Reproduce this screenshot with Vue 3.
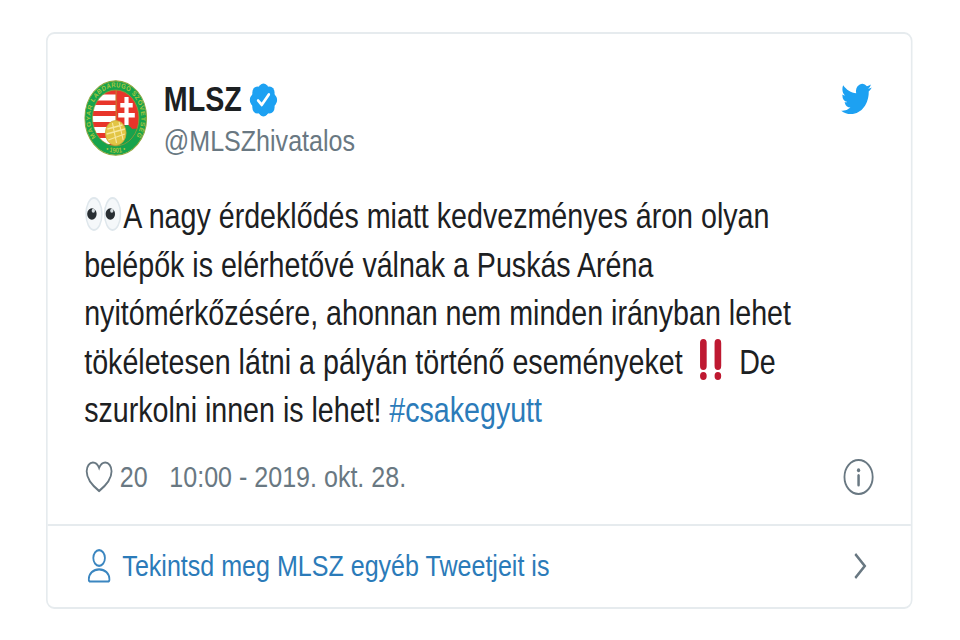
<script setup>
const lines = [
  { text: 'A nagy érdeklődés miatt kedvezményes áron olyan', eyes: true, spacing: 0 },
  { text: 'belépők is elérhetővé válnak a Puskás Aréna', spacing: -0.02 },
  { text: 'nyitómérkőzésére, ahonnan nem minden irányban lehet', spacing: 0 },
  { text: 'tökéletesen látni a pályán történő eseményeket', bang: true, after: 'De', spacing: 0 },
  { text: 'szurkolni innen is lehet! ', tag: '#csakegyutt', spacing: -0.02 },
]
</script>

<template>
  <article class="card">
    <div class="content">
      <header class="header">
        <svg class="avatar" viewBox="0 0 76 76">
          <defs>
            <path id="ring" d="M13.9 57A30.7 30.7 0 1 1 62.1 57" />
            <path id="year" d="M6 52A35 35 0 0 0 70 52" />
            <clipPath id="shield"><circle cx="38" cy="38" r="28" /></clipPath>
          </defs>
          <circle cx="38" cy="38" r="37.2" fill="#17a34c" stroke="#8fa840" stroke-width="1.2" />
          <g clip-path="url(#shield)">
            <path fill="#e8352a" d="M8 8h60v60H8z" />
            <path fill="#fff" d="M8 14.500h30v6H8zM8 25h30v6H8zM8 36h30v6H8zM8 47h30v6H8zM8 58h30v6H8z" />
            <path fill="#18a24c" d="M37 66l9-19 6-3 6 5 10-1v20H34z" />
            <path fill="#fff" d="M48.500 17h5v6h5v4.500h-5V33h7.500v4.500h-7.500V45h-5v-7.500H41V33h7.500v-5.500h-5V23h5z" />
            <path stroke="#c28a2d" stroke-width="1" d="M38.500 10v32" />
          </g>
          <circle cx="38" cy="38" r="28" fill="none" stroke="#8ea63a" stroke-width=".8" />
          <circle cx="38" cy="53" r="12.500" fill="#e2c545" stroke="#c9a83a" stroke-width=".8" />
          <path fill="none" stroke="#f7e8a0" stroke-width="1.300" d="M28 49l18-4M27 54l22-5M29 60l20-6M34 43l5 20M42 42l5 18" />
          <text class="ring-text"><textPath href="#ring" textLength="136">MAGYAR LABDARÚGÓ SZÖVETSÉG</textPath></text>
          <text class="ring-text"><textPath href="#year" startOffset="50%" text-anchor="middle">• 1901 •</textPath></text>
        </svg>
        <div class="author">
          <div class="name">
            <span>MLSZ</span>
            <svg class="verified" viewBox="0 0 34 34">
              <g fill="#1da1f2">
                <circle cx="17" cy="17" r="14.600" />
                <circle cx="17" cy="6.500" r="6" /><circle cx="24.400" cy="9.600" r="6" />
                <circle cx="27.500" cy="17" r="6" /><circle cx="24.400" cy="24.400" r="6" />
                <circle cx="17" cy="27.500" r="6" /><circle cx="9.600" cy="24.400" r="6" />
                <circle cx="6.500" cy="17" r="6" /><circle cx="9.600" cy="9.600" r="6" />
              </g>
              <path d="M10.500 17.500l4.500 4.300 8.500-10.300" fill="none" stroke="#fff" stroke-width="3" stroke-linecap="round" stroke-linejoin="round" />
            </svg>
          </div>
          <div class="handle">@MLSZhivatalos</div>
        </div>
        <svg class="bird" viewBox="0 0 24 24">
          <path fill="#1da1f2" d="M23.953 4.570a10 10 0 0 1-2.825.775 4.958 4.958 0 0 0 2.163-2.723c-.951.555-2.005.959-3.127 1.184a4.920 4.920 0 0 0-8.384 4.482C7.690 8.095 4.067 6.130 1.640 3.162a4.822 4.822 0 0 0-.666 2.475c0 1.710.870 3.213 2.188 4.096a4.904 4.904 0 0 1-2.228-.616v.060a4.923 4.923 0 0 0 3.946 4.827 4.996 4.996 0 0 1-2.212.085 4.936 4.936 0 0 0 4.604 3.417 9.867 9.867 0 0 1-6.102 2.105c-.390 0-.779-.023-1.170-.067a13.995 13.995 0 0 0 7.557 2.209c9.053 0 13.998-7.496 13.998-13.985 0-.210 0-.420-.015-.630A9.935 9.935 0 0 0 24 4.590z" />
        </svg>
      </header>

      <div class="tweet">
        <div v-for="line in lines" :key="line.text" class="line" :style="{ letterSpacing: line.spacing + 'px' }">
          <svg v-if="line.eyes" class="eyes" viewBox="0 0 44 36">
            <g fill="#f5f8fa" stroke="#dfe7ec" stroke-width="1.800">
              <ellipse cx="10.800" cy="18" rx="9.600" ry="16" /><ellipse cx="33.200" cy="18" rx="9.600" ry="16" />
            </g>
            <circle cx="8.300" cy="18" r="5.700" fill="#292f33" /><circle cx="30.500" cy="18" r="5.700" fill="#292f33" />
            <circle cx="10" cy="14.800" r="2" fill="#d5dce0" /><circle cx="32.300" cy="14.800" r="2" fill="#d5dce0" />
          </svg><span>{{ line.text }}</span><svg v-if="line.bang" class="bang" viewBox="0 0 32 41">
            <g fill="#be1931">
              <rect x="1" y="0" width="8" height="31" rx="4" /><circle cx="5" cy="37" r="4" />
              <rect x="18.500" y="0" width="8" height="31" rx="4" /><circle cx="22.500" cy="37" r="4" />
            </g>
          </svg><span v-if="line.after">{{ line.after }}</span><a v-if="line.tag" class="tag">{{ line.tag }}</a>
        </div>
      </div>

      <div class="meta">
        <svg class="heart" viewBox="0 0 34 32">
          <path d="M17 30C11 26 2 18.500 2 10.300 2 5 5.500 1.500 9.500 1.500c3.500 0 6 2 7.500 5.400 1.500-3.400 4-5.400 7.500-5.400 4 0 7.500 3.500 7.500 8.800C32 18.500 23 26 17 30z" />
        </svg>
        <span class="likes">20</span>
        <time class="time">10:00 - 2019. okt. 28.</time>
        <svg class="info" viewBox="0 0 38 38">
          <circle cx="19" cy="19" r="17" />
          <path d="M19 17.500v9.500" stroke-width="3" stroke-linecap="round" />
          <circle cx="19" cy="12.200" r="2" class="dot" />
        </svg>
      </div>
    </div>

    <footer class="footer">
      <svg class="person" viewBox="0 0 28 34">
        <ellipse cx="14" cy="9" rx="7" ry="7.800" />
        <path d="M3.500 32.500c-1.200 0-2-.8-2-2C1.500 24.500 7 20.300 14 20.300s12.500 4.200 12.500 10.200c0 1.200-.8 2-2 2z" />
      </svg>
      <a class="more">Tekintsd meg MLSZ egyéb Tweetjeit is</a>
      <svg class="chevron" viewBox="0 0 16 28"><path d="M2 2l11.500 12L2 26" /></svg>
    </footer>
  </article>
</template>

<style>
html,
body {
  margin: 0;
  background: #fff;
  overflow: hidden;
}
</style>

<style scoped>
.card {
  box-sizing: border-box;
  width: 1044px;
  height: 577px;
  margin: 32px 0 0 46px;
  border: 2px solid #e6ebee;
  border-radius: 10px / 9px;
  background: #fff;
  color: #1c2022;
  font-family: "Liberation Sans", Arial, sans-serif;
  transform: scaleX(0.83);
  transform-origin: 0 0;
  display: flex;
  flex-direction: column;
}

svg {
  display: block;
  flex: none;
}

.content {
  box-sizing: border-box;
  height: 490px;
  padding: 46px 44px 0;
}

.header {
  display: flex;
  height: 112.7px;
}

.avatar {
  width: 76px;
  height: 76px;
}

.ring-text {
  font-size: 7px;
  font-weight: bold;
  fill: #a9c33f;
}

.author {
  margin: -2px 0 0 20px;
  flex: 1;
}

.name {
  display: flex;
  align-items: center;
  height: 42px;
  font-size: 34.5px;
  font-weight: 700;
}

.verified {
  width: 34px;
  height: 34px;
  margin: 1px 0 0 9px;
}

.handle {
  line-height: 42px;
  font-size: 30.2px;
  color: #697882;
}

.bird {
  width: 37px;
  height: 38px;
  margin-right: 3px;
}

.tweet {
  height: 263.3px;
  font-size: 34.5px;
}

.line {
  display: flex;
  align-items: center;
  height: 48.4px;
  white-space: pre;
}

.eyes {
  width: 44px;
  height: 36px;
  margin: -6px 2px 0 1px;
}

.bang {
  width: 32px;
  height: 41px;
  margin: -6px 16px 0 20px;
}

.tag,
.more {
  color: #2b7bb9;
}

.meta {
  display: flex;
  align-items: center;
  height: 42px;
  font-size: 30.2px;
  color: #697882;
}

.heart {
  width: 34px;
  height: 32px;
  margin: 0 8px 0 1px;
}

.heart,
.info,
.person,
.chevron {
  fill: none;
  stroke: #697882;
  stroke-width: 2.2;
}

.time {
  margin-left: 26px;
}

.info {
  width: 38px;
  height: 38px;
  margin-left: auto;
}

.info .dot {
  fill: #697882;
  stroke: none;
}

.footer {
  display: flex;
  flex: 1;
  align-items: center;
  padding: 0 53px 2px 48px;
  border-top: 2px solid #e6ebee;
  font-size: 30.2px;
}

.person {
  width: 28px;
  height: 34px;
  margin-right: 14px;
  stroke: #3b86c0;
}

.chevron {
  width: 16px;
  height: 28px;
  margin-left: auto;
  stroke-width: 2.8;
}
</style>
